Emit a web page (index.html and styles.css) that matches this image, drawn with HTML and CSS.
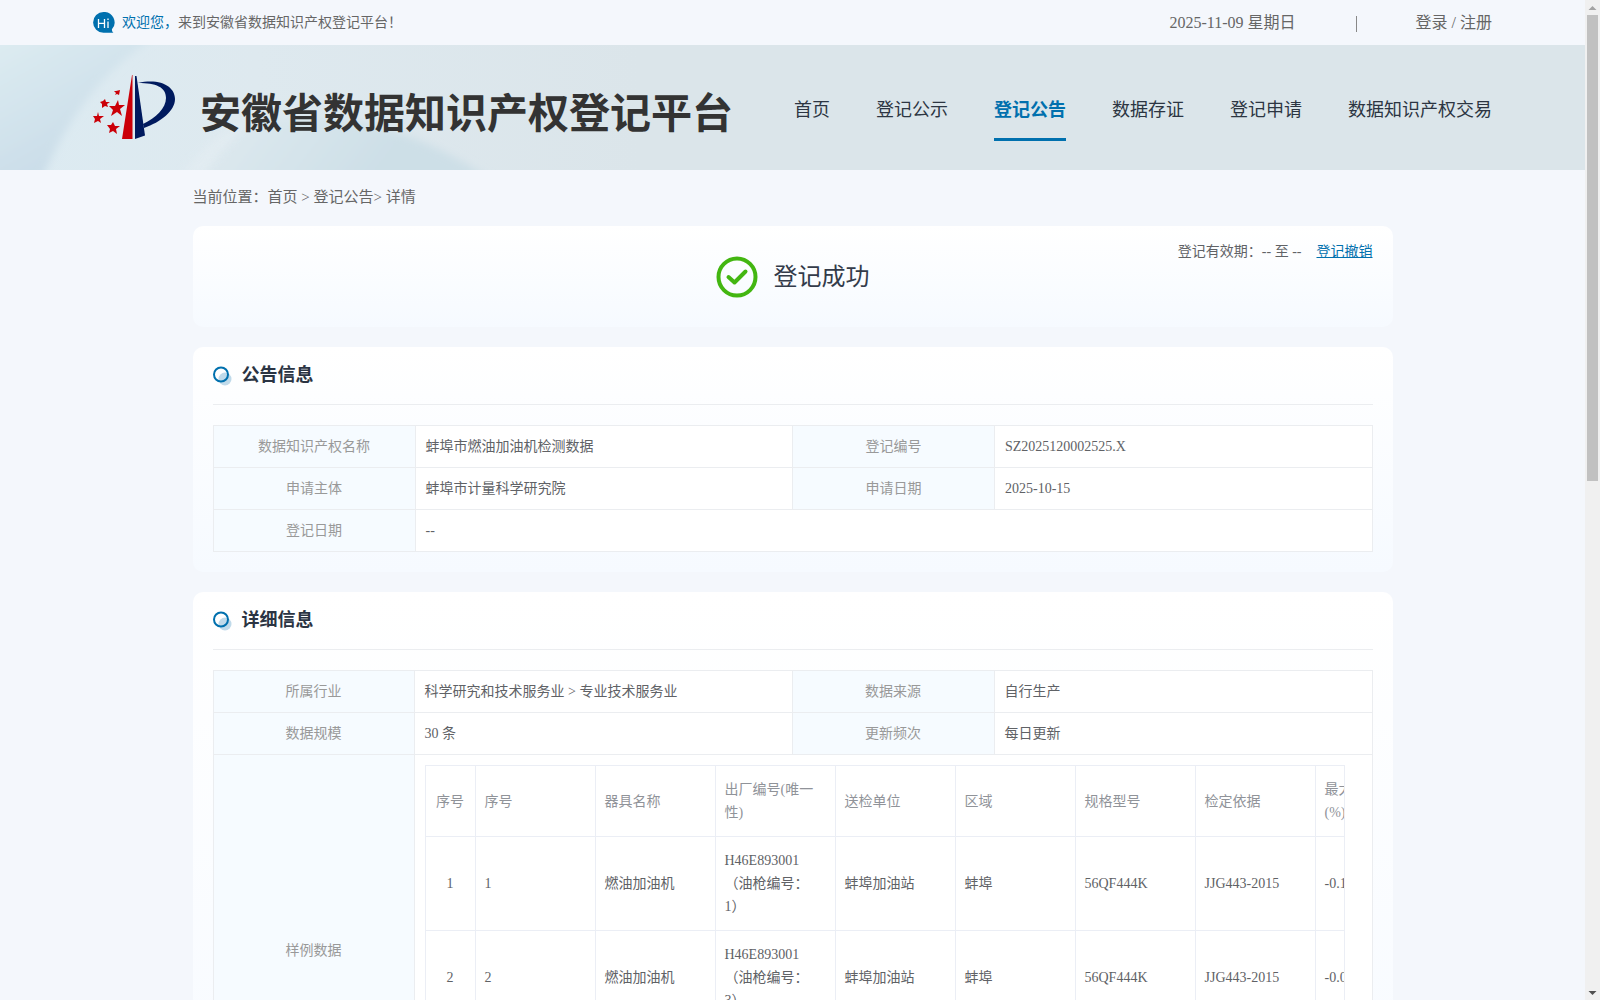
FILE: index.html
```html
<!DOCTYPE html>
<html lang="zh-CN">
<head>
<meta charset="utf-8">
<meta name="viewport" content="width=device-width, initial-scale=1">
<title>安徽省数据知识产权登记平台</title>
<link rel="stylesheet" href="styles.css">
</head>
<body>
<div class="window">
<div class="page">
  <div class="topbar">
    <svg class="hi" width="22" height="22" viewBox="0 0 22 22" aria-hidden="true">
      <path fill="#0070ae" d="M10.500 0a10.400 10.400 0 1 0 0 20.800h10c-1-.5-1.600-1.400-1.600-3.500A10.400 10.400 0 0 0 10.500 0z"/>
      <path stroke="#fff" stroke-width="1.300" fill="none" d="M5.500 7v9M11.500 7v9M5.500 11.300h6M15 9.500V16M15 6.500v1.500"/>
    </svg>
    <p class="welcome"><span class="accent">欢迎您，</span>来到安徽省数据知识产权登记平台！</p>
    <span class="date">2025-11-09 星期日</span>
    <span class="bar"></span>
    <span class="auth"><a href="#">登录</a> / <a href="#">注册</a></span>
  </div>

  <header class="header">
    <svg class="backdrop" width="640" height="125" viewBox="0 0 640 125" aria-hidden="true">
      <defs>
        <linearGradient id="g1" x1="0" y1="0" x2="1" y2="0"><stop offset="0" stop-color="#dcebf2"/><stop offset=".4" stop-color="#dee9ef"/><stop offset="1" stop-color="#dbe5ea"/></linearGradient>
        <linearGradient id="g2" gradientUnits="userSpaceOnUse" x1="0" y1="0" x2="70" y2="125"><stop offset="0" stop-color="#dcebf1"/><stop offset="1" stop-color="#c9dce8"/></linearGradient>
        <linearGradient id="g3" gradientUnits="userSpaceOnUse" x1="220" y1="0" x2="380" y2="125"><stop offset="0.300" stop-color="#dce8ee"/><stop offset="1" stop-color="#cddfe7"/></linearGradient>
        <filter id="soft" x="-10%" y="-10%" width="120%" height="120%"><feGaussianBlur stdDeviation="4"/></filter>
      </defs>
      <path fill="url(#g1)" d="M0 0h640v125H0z"/>
      <path fill="url(#g2)" filter="url(#soft)" d="M-20-20H175Q80 30 38 145H-20z"/>
      <path fill="url(#g3)" filter="url(#soft)" d="M195 145Q225 95 262 76Q390 58 505 145z"/>
      <path fill="#e5eef3" opacity=".6" filter="url(#soft)" d="M182 130Q210 90 262 66Q228 92 203 130z"/>
    </svg>
    <a class="brand" href="#">
      <svg width="84" height="68" viewBox="0 0 84 68" aria-hidden="true">
        <path fill="#cb0008" d="M39 1 29 65h10.500V1z"/>
        <path fill="#001a5e" d="M42 2v63l10-3.500L43.500 2z"/>
        <path fill="#001a5e" d="M45 9C68 4 82 13 82 25C82 37 68 48 51 54L50 50C63 44 73 34 73 24C73 13 63 9 45 9z"/>
        <g fill="#cb0008">
          <path d="m25 26 1 5 6 0-5 4 2 7-5-4-6 4 2-6-4-4 6 0z"/>
          <path d="m12 25 1 3 4 0-3 2 1 3-3-1-3 2 0-4-2-2 3-1z"/>
          <path d="m27 16-1 5-2-1-2 1 1-2-2-2 2 0z"/>
          <path d="m5 38 1 4 5 0-4 3 1 4-3-2-4 2 1-4-2-3 4 0z"/>
          <path d="m20 48 2 4 5 0-4 3 1 5-4-3-4 2 1-4-3-4 4 0z"/>
        </g>
      </svg>
      <span class="brand-name">安徽省数据知识产权登记平台</span>
    </a>
    <nav class="nav">
      <a href="#">首页</a>
      <a href="#">登记公示</a>
      <a class="active" href="#">登记公告</a>
      <a href="#">数据存证</a>
      <a href="#">登记申请</a>
      <a href="#">数据知识产权交易</a>
    </nav>
  </header>

  <main class="main">
    <div class="crumbs">当前位置：<a href="#">首页</a> &gt; <a href="#">登记公告</a>&gt; 详情</div>

    <section class="card status">
      <div class="result">
        <svg width="42" height="42" viewBox="0 0 42 42" fill="none" stroke="#43b611" aria-hidden="true">
          <circle cx="21" cy="21" r="18.500" stroke-width="4"/>
          <path stroke-width="4" stroke-linecap="round" stroke-linejoin="round" d="m12.500 21 6 5.500 11-11"/>
        </svg>
        <span>登记成功</span>
      </div>
      <div class="validity">登记有效期：-- 至 --<a href="#">登记撤销</a></div>
    </section>

    <section class="card">
      <h2 class="card-title">
        <svg width="19" height="20" viewBox="0 0 19 20" aria-hidden="true"><circle cx="12" cy="13" r="6.500" fill="#c0daea"/><circle cx="8" cy="8.500" r="7" fill="none" stroke="#0070ae" stroke-width="2"/></svg>
        公告信息
      </h2>
      <table class="info">
        <tr><th>数据知识产权名称</th><td>蚌埠市燃油加油机检测数据</td><th>登记编号</th><td>SZ2025120002525.X</td></tr>
        <tr><th>申请主体</th><td>蚌埠市计量科学研究院</td><th>申请日期</th><td>2025-10-15</td></tr>
        <tr><th>登记日期</th><td colspan="3">--</td></tr>
      </table>
    </section>

    <section class="card">
      <h2 class="card-title">
        <svg width="19" height="20" viewBox="0 0 19 20" aria-hidden="true"><circle cx="12" cy="13" r="6.500" fill="#c0daea"/><circle cx="8" cy="8.500" r="7" fill="none" stroke="#0070ae" stroke-width="2"/></svg>
        详细信息
      </h2>
      <table class="info detail">
        <tr><th>所属行业</th><td>科学研究和技术服务业 &gt; 专业技术服务业</td><th>数据来源</th><td>自行生产</td></tr>
        <tr><th>数据规模</th><td>30 条</td><th>更新频次</th><td>每日更新</td></tr>
        <tr>
          <th>样例数据</th>
          <td colspan="3">
            <div class="sample">
              <table class="grid">
                <thead>
                  <tr><th class="index">序号</th><th>序号</th><th>器具名称</th><th>出厂编号(唯一性)</th><th>送检单位</th><th>区域</th><th>规格型号</th><th>检定依据</th><th>最大示值误差(%)</th></tr>
                </thead>
                <tbody>
                  <tr><td class="index">1</td><td>1</td><td>燃油加油机</td><td>H46E893001（油枪编号：1）</td><td>蚌埠加油站</td><td>蚌埠</td><td>56QF444K</td><td>JJG443-2015</td><td>-0.1</td></tr>
                  <tr><td class="index">2</td><td>2</td><td>燃油加油机</td><td>H46E893001（油枪编号：3）</td><td>蚌埠加油站</td><td>蚌埠</td><td>56QF444K</td><td>JJG443-2015</td><td>-0.0</td></tr>
                </tbody>
              </table>
            </div>
          </td>
        </tr>
      </table>
    </section>
  </main>
</div>
<div class="scrollbar" aria-hidden="true">
  <svg width="15" height="15" viewBox="0 0 15 15"><path fill="#a3a3a3" d="m7.500 6 4 4h-8z"/></svg>
  <div class="track"><div class="thumb"></div></div>
  <svg width="15" height="15" viewBox="0 0 15 15"><path fill="#505050" d="m7.500 10-4-4h8z"/></svg>
</div>
</div>
</body>
</html>
```
FILE: styles.css
```css
* { box-sizing: border-box; }

body {
  margin: 0;
  background: #f4f7fc;
  color: #606266;
  font: 14px/21px "Liberation Serif", "Noto Sans CJK SC", serif;
}

a { color: inherit; text-decoration: none; }
p, h2 { margin: 0; }

.window { display: flex; height: 100vh; }
.page { flex: 1; min-width: 0; overflow: hidden; }

.topbar {
  display: flex;
  align-items: center;
  height: 45px;
  padding: 0 93px;
  font-size: 16px;
  color: #666;
}
.hi { margin-right: 7px; }
.welcome { font-size: 14px; margin-right: auto; }
.accent { color: #0070ae; }
.bar { width: 1px; height: 16px; margin: 2px 59px 0 60px; background: #888; }

.header {
  position: relative;
  display: flex;
  align-items: center;
  justify-content: space-between;
  height: 125px;
  padding: 0 93px;
  background: #dbe5ea;
}
.backdrop { position: absolute; left: 0; top: 0; }
.brand { position: relative; display: flex; align-items: center; gap: 23px; }
.brand-name {
  padding-top: 12px;
  font-size: 41px;
  line-height: 48px;
  font-weight: bold;
  color: #333;
  white-space: nowrap;
}
.nav { position: relative; display: flex; gap: 46px; padding-top: 4px; }
.nav a {
  padding: 18px 0 14px;
  border-bottom: 3px solid transparent;
  font-size: 18px;
  line-height: 28px;
  color: #2c3542;
  white-space: nowrap;
}
.nav .active { color: #0070ae; border-color: #0070ae; font-weight: bold; }

.main { width: 1200px; max-width: 100%; margin: 0 auto; }
.crumbs { padding: 16px 0 17px; font-size: 15px; line-height: 23px; color: #666; }

.card {
  margin-bottom: 20px;
  padding: 0 20px 20px;
  border-radius: 10px;
  background: linear-gradient(#fff, #f6faff);
}
.status {
  display: grid;
  grid-template-columns: 1fr auto 1fr;
  height: 101px;
  padding-bottom: 0;
}
.result {
  grid-column: 2;
  display: flex;
  align-items: center;
  gap: 16px;
  font-size: 24px;
  line-height: 36px;
  color: #333b4a;
}
.validity { padding-top: 15px; text-align: right; }
.validity a { margin-left: 15px; color: #0070ae; text-decoration: underline; }

.card-title {
  display: flex;
  align-items: center;
  gap: 10px;
  height: 58px;
  margin-bottom: 20px;
  border-bottom: 1px solid #ebedf0;
  font-size: 18px;
  color: #2b3443;
}

.info { width: 100%; table-layout: fixed; border-collapse: collapse; }
.info > tbody > tr > th,
.info > tbody > tr > td { padding: 10px; border: 1px solid #ebedf0; background: #fff; }
.info > tbody > tr > th {
  width: 202px;
  background: #f6fbff;
  font-weight: normal;
  color: #999;
}
.detail > tbody > tr > th:first-child { width: 201px; }

.sample {
  width: 920px;
  max-width: 100%;
  height: 370px;
  overflow: hidden;
  border-right: 1px solid #ebeef5;
}
.grid {
  width: 1011px;
  table-layout: fixed;
  border-collapse: collapse;
  line-height: 23px;
  text-spacing-trim: space-all;
}
.grid th, .grid td {
  width: 120px;
  padding: 12px 9px;
  border: 1px solid #ebeef5;
  text-align: left;
}
.grid th { font-weight: normal; color: #909399; }
.grid .index { width: 50px; text-align: center; }

.scrollbar { display: flex; flex-direction: column; width: 15px; background: #f0f0f0; }
.track { flex: 1; padding: 0 2px; }
.thumb { height: 48%; background: #c1c1c1; }
```
